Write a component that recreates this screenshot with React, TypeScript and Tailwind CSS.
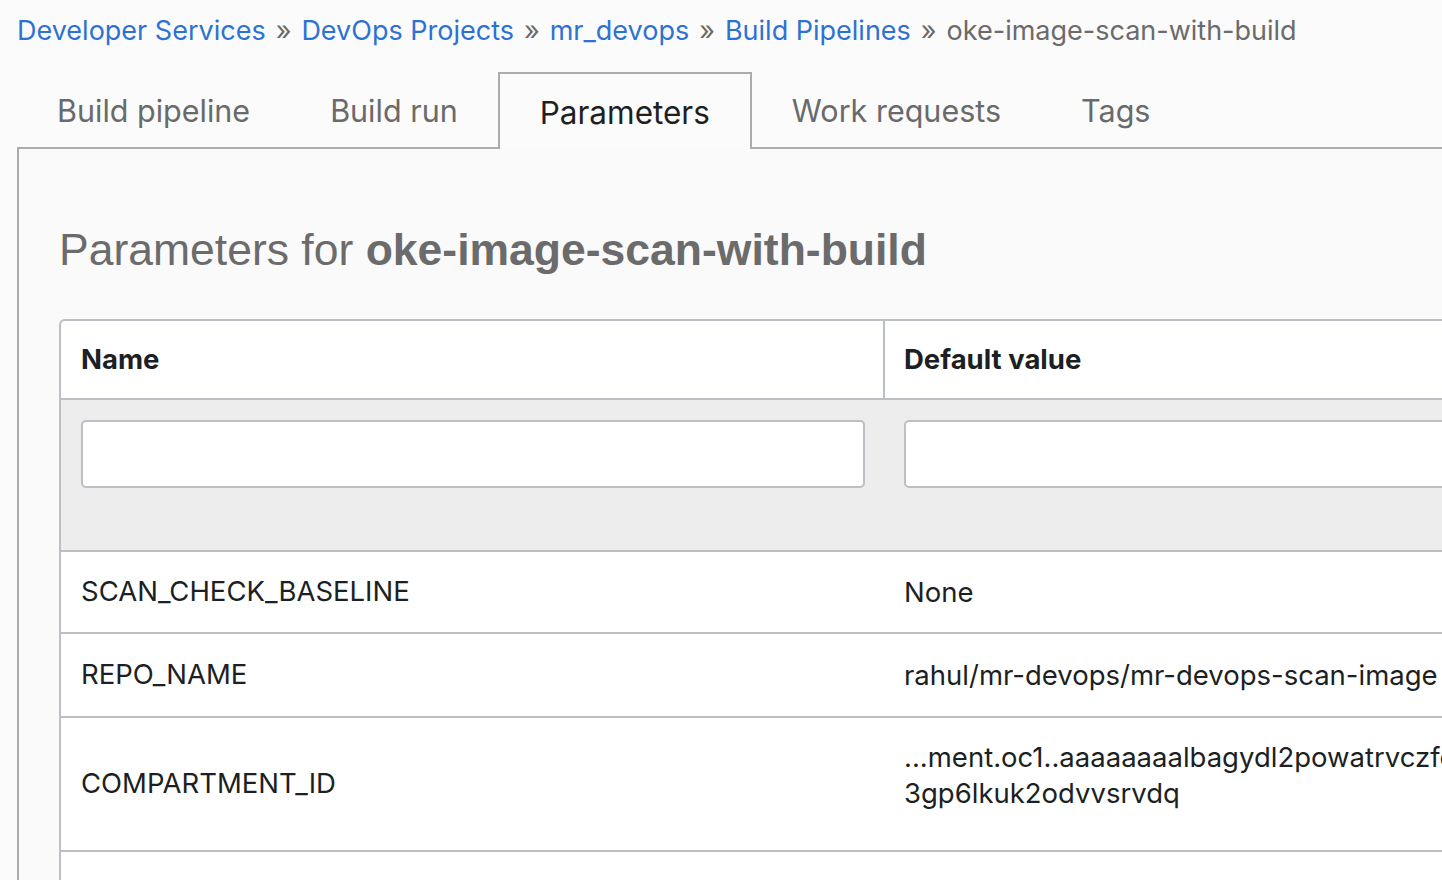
const crumbs = ["Developer Services", "DevOps Projects", "mr_devops", "Build Pipelines"];

const tabs = ["Build pipeline", "Build run", "Parameters", "Work requests", "Tags"];

const rows = [
  { name: "SCAN_CHECK_BASELINE", value: ["None"], height: "h-[82px]", pad: "" },
  { name: "REPO_NAME", value: ["rahul/mr-devops/mr-devops-scan-image"], height: "h-[84px]", pad: "" },
  {
    name: "COMPARTMENT_ID",
    value: ["...ment.oc1..aaaaaaaalbagydl2powatrvczfcxq4", "3gp6lkuk2odvvsrvdq"],
    height: "h-[134px]",
    pad: "pb-[18px]",
  },
];

const Breadcrumbs = () => {
  return (
    <nav className="flex h-[62px] items-center whitespace-nowrap pl-[17px] pt-[1px] text-[27px] font-['Inter',sans-serif]">
      {crumbs.map((c) => (
        <span key={c} className="flex items-center">
          <span className="text-[#2d72d2]">{c}</span>
          <span className="mx-[10px] text-[#6b6b6b]">»</span>
        </span>
      ))}
      <span className="text-[#6b6b6b]">oke-image-scan-with-build</span>
    </nav>
  );
};

const Tabs = () => {
  return (
    <div className="ml-[17px] mt-[10px] flex h-[77px] border-b-2 border-[#acacac] font-['Inter',sans-serif]">
      {tabs.map((t) =>
        t === "Parameters" ? (
          <div
            key={t}
            className="relative -mb-[2px] flex items-center border-2 border-b-0 border-[#acacac] bg-[#fbfbfb] px-[40px] pt-[3px] text-[31.5px] text-[#1f1f1f]"
          >
            {t}
          </div>
        ) : (
          <div key={t} className="flex items-center px-[40px] pt-[3px] text-[30.5px] text-[#6a6a6a]">
            {t}
          </div>
        )
      )}
    </div>
  );
};

const FilterInput = () => (
  <div className="h-[68px] w-full rounded-[5px] border-2 border-[#bcbfc4] bg-white" />
);

const ParamTable = () => {
  return (
    <div className="w-[1560px] overflow-hidden rounded-tl-[6px] border-l-2 border-t-2 border-[#bcbfc4] bg-white font-['Inter',sans-serif] text-[27.5px] text-[#1c1f23]">
      <div className="grid h-[79px] grid-cols-[824px_1fr] border-b-2 border-[#bcbfc4]">
        <div className="flex items-center border-r-2 border-[#bcbfc4] pl-[20px] font-bold">Name</div>
        <div className="flex items-center pl-[19px] font-bold">Default value</div>
      </div>
      <div className="grid h-[152px] grid-cols-[824px_1fr] border-b-2 border-[#bcbfc4] bg-[#ededed] pt-[20px]">
        <div className="pl-[20px] pr-[20px]">
          <FilterInput />
        </div>
        <div className="pl-[19px]">
          <FilterInput />
        </div>
      </div>
      {rows.map((r) => (
        <div key={r.name} className={`grid grid-cols-[824px_1fr] border-b-2 border-[#bcbfc4] ${r.height}`}>
          <div className="flex items-center pl-[20px]">{r.name}</div>
          <div className={`flex flex-col justify-center whitespace-nowrap pl-[19px] leading-[36px] ${r.pad}`}>
            {r.value.map((v) => (
              <span key={v}>{v}</span>
            ))}
          </div>
        </div>
      ))}
      <div className="h-[90px]" />
    </div>
  );
};

export default function App() {
  return (
    <div className="h-[880px] w-[1442px] overflow-hidden bg-[#fbfbfb]">
      <Breadcrumbs />
      <Tabs />
      <div className="ml-[17px] h-full border-l-2 border-[#acacac] bg-[#fafafa] pl-[40px]">
        <h1 className="pt-[76px] pb-[44px] font-['Liberation_Sans',Arial,sans-serif] text-[44.5px] leading-[50px] text-[#6b6b6b]">
          Parameters for <span className="font-bold">oke-image-scan-with-build</span>
        </h1>
        <ParamTable />
      </div>
    </div>
  );
}
